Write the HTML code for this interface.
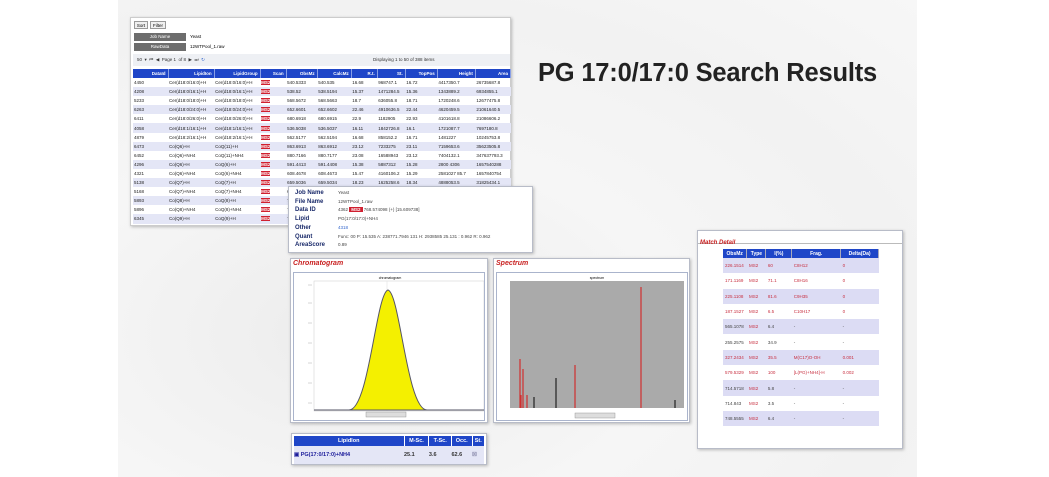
<!DOCTYPE html>
<html><head><meta charset="utf-8"><style>
*{margin:0;padding:0;box-sizing:border-box}
body{width:1049px;height:477px;background:#fff;position:relative;overflow:hidden;font-family:"Liberation Sans",sans-serif}
.bg{position:absolute;left:118px;top:0;width:799px;height:477px;background:radial-gradient(ellipse at 30% 70%,#ececec,#f6f6f6 40%,#f2f2f2 70%,#f7f7f7)}
.ab{position:absolute}
.panel{position:absolute;background:#fff;border:1px solid #b8bcc8;box-shadow:1px 1px 3px rgba(0,0,0,.25)}
table{border-collapse:collapse;font-size:4.5px;white-space:nowrap}
.main td{height:9.1px;padding:0 1px;color:#222;overflow:hidden}
.main tr:nth-child(odd) td{background:#e4e6f6}
.main th{background:#1f46c8;color:#fff;height:9px;font-size:4.5px;text-align:right;padding-right:2px;border-right:1px solid #8aa0e6}
.b{color:#3355cc}.r{color:#fff;background:#d02030!important;font-weight:bold}
.lbl{font-weight:bold;color:#1a2a6a;font-size:6px}
.md td{height:15.3px;font-size:4.5px;color:#c83040;padding-left:2px}
.md tr:nth-child(even) td{background:#dcdcf4}
.md th{background:#1f46c8;color:#fff;font-size:5px;height:9px;border-right:1px solid #aab}
.ttl{font-style:italic;font-weight:bold;color:#c82020;font-size:7px}
</style></head><body>
<div class="bg"></div>

<div class="ab" style="left:538px;top:59px;font-size:25.5px;font-weight:bold;color:#222;letter-spacing:-0.2px">PG 17:0/17:0 Search Results</div>

<!-- main table panel -->
<div class="panel" style="left:130px;top:17px;width:381px;height:209px;border-color:#ccc">
 <div class="ab" style="left:3px;top:3px;width:14px;height:8px;border:1px solid #999;background:#f0f0f0;font-size:4.5px;text-align:center;line-height:7px">Sort</div>
 <div class="ab" style="left:19px;top:3px;width:16px;height:8px;border:1px solid #999;background:#f0f0f0;font-size:4.5px;text-align:center;line-height:7px">Filter</div>
 <div class="ab" style="left:3px;top:15px;width:52px;height:8px;background:#6d6d6d;color:#fff;font-size:4.5px;text-align:center;line-height:8px">Job Name</div>
 <div class="ab" style="left:3px;top:25px;width:52px;height:8px;background:#6d6d6d;color:#fff;font-size:4.5px;text-align:center;line-height:8px">RawData</div>
 <div class="ab" style="left:59px;top:15px;font-size:4.5px;line-height:8px">Yeast</div>
 <div class="ab" style="left:59px;top:25px;font-size:4.5px;line-height:8px">12WTPool_1.raw</div>
 <div class="ab" style="left:2px;top:36px;width:377px;height:12px;background:#eef0f4;font-size:4.5px;line-height:12px;padding-left:4px;color:#333">50 &nbsp;▾ &nbsp;⏮ &nbsp;◀ &nbsp;Page 1 &nbsp;of 8 &nbsp;▶ &nbsp;⏭ &nbsp;<span style="color:#36c">↻</span><span style="position:absolute;left:240px">Displaying 1 to 50 of 388 items</span></div>
 <table class="main ab" style="left:2px;top:51px;width:378px">
 <tr><th style="width:35px">DataId</th><th style="width:46px">LipidIon</th><th style="width:46px">LipidGroup</th><th style="width:26px">Scan</th><th style="width:31px">ObsMz</th><th style="width:34px">CalcMz</th><th style="width:26px">R.t.</th><th style="width:28px">St.</th><th style="width:32px">TopPos</th><th style="width:38px">Height</th><th style="width:35px">Area</th></tr>
 <tr><td class="b">4450</td><td class="b">Cer(d18:0/16:0)+H</td><td>Cer(d18:0/16:0)+H</td><td><span class="r">MS2</span></td><td>540.5333</td><td>540.535</td><td>16.68</td><td>968747.1</td><td>16.72</td><td>4417350.7</td><td>26735687.8</td></tr>
 <tr><td class="b">4208</td><td class="b">Cer(d18:0/16:1)+H</td><td>Cer(d18:0/16:1)+H</td><td><span class="r">MS2</span></td><td>538.52</td><td>538.5194</td><td>15.37</td><td>1471284.5</td><td>15.36</td><td>1343889.2</td><td>6934855.1</td></tr>
 <tr><td class="b">5233</td><td class="b">Cer(d18:0/18:0)+H</td><td>Cer(d18:0/18:0)+H</td><td><span class="r">MS2</span></td><td>568.5672</td><td>568.5663</td><td>18.7</td><td>636055.8</td><td>18.71</td><td>1720248.6</td><td>12677475.8</td></tr>
 <tr><td class="b">6263</td><td class="b">Cer(d18:0/24:0)+H</td><td>Cer(d18:0/24:0)+H</td><td><span class="r">MS2</span></td><td>652.6601</td><td>652.6602</td><td>22.46</td><td>4910636.5</td><td>22.44</td><td>4620459.5</td><td>21061640.5</td></tr>
 <tr><td class="b">6411</td><td class="b">Cer(d18:0/26:0)+H</td><td>Cer(d18:0/26:0)+H</td><td><span class="r">MS2</span></td><td>680.6918</td><td>680.6915</td><td>22.9</td><td>1182905</td><td>22.93</td><td>4101618.8</td><td>21086606.2</td></tr>
 <tr><td class="b">4058</td><td class="b">Cer(d18:1/16:1)+H</td><td>Cer(d18:1/16:1)+H</td><td><span class="r">MS2</span></td><td>536.5038</td><td>536.5037</td><td>16.11</td><td>1842726.8</td><td>16.1</td><td>1721087.7</td><td>7697180.8</td></tr>
 <tr><td class="b">4879</td><td class="b">Cer(d18:2/16:1)+H</td><td>Cer(d18:2/16:1)+H</td><td><span class="r">MS2</span></td><td>562.5177</td><td>562.5194</td><td>16.68</td><td>858152.2</td><td>16.71</td><td>1481227</td><td>10245753.8</td></tr>
 <tr><td class="b">6473</td><td class="b">Co(Q6)+H</td><td>CoQ(11)+H</td><td><span class="r">MS2</span></td><td>863.6913</td><td>863.6912</td><td>23.12</td><td>7233275</td><td>23.11</td><td>7159653.6</td><td>35623505.8</td></tr>
 <tr><td class="b">6452</td><td class="b">Co(Q6)+NH4</td><td>CoQ(11)+NH4</td><td><span class="r">MS2</span></td><td>880.7166</td><td>880.7177</td><td>23.08</td><td>16588943</td><td>23.12</td><td>7404132.1</td><td>347637793.3</td></tr>
 <tr><td class="b">4296</td><td class="b">Co(Q6)+H</td><td>CoQ(6)+H</td><td><span class="r">MS2</span></td><td>591.4413</td><td>591.4408</td><td>15.38</td><td>5887312</td><td>15.28</td><td>2800 4306</td><td>1657540288</td></tr>
 <tr><td class="b">4321</td><td class="b">Co(Q6)+NH4</td><td>CoQ(6)+NH4</td><td><span class="r">MS2</span></td><td>608.4678</td><td>608.4673</td><td>15.47</td><td>4160106.2</td><td>15.29</td><td>2581027 85.7</td><td>1657840754</td></tr>
 <tr><td class="b">5138</td><td class="b">Co(Q7)+H</td><td>CoQ(7)+H</td><td><span class="r">MS2</span></td><td>659.5036</td><td>659.5034</td><td>18.23</td><td>1625258.6</td><td>18.34</td><td>4888053.5</td><td>31825434.1</td></tr>
 <tr><td class="b">5168</td><td class="b">Co(Q7)+NH4</td><td>CoQ(7)+NH4</td><td><span class="r">MS2</span></td><td>676</td><td></td><td></td><td></td><td></td><td></td><td></td></tr>
 <tr><td class="b">5893</td><td class="b">Co(Q8)+H</td><td>CoQ(8)+H</td><td><span class="r">MS2</span></td><td>727</td><td></td><td></td><td></td><td></td><td></td><td></td></tr>
 <tr><td class="b">5896</td><td class="b">Co(Q8)+NH4</td><td>CoQ(8)+NH4</td><td><span class="r">MS2</span></td><td>744</td><td></td><td></td><td></td><td></td><td></td><td></td></tr>
 <tr><td class="b">6345</td><td class="b">Co(Q9)+H</td><td>CoQ(9)+H</td><td><span class="r">MS2</span></td><td>795</td><td></td><td></td><td></td><td></td><td></td><td></td></tr>
 </table>
</div>

<!-- detail popup -->
<div class="panel" style="left:288px;top:186px;width:245px;height:67px;padding:2px 0 0 6px;line-height:8.7px;font-size:4.5px;color:#444">
 <div><span class="lbl" style="display:inline-block;width:43px">Job Name</span>Yeast</div>
 <div><span class="lbl" style="display:inline-block;width:43px">File Name</span>12WTPool_1.raw</div>
 <div><span class="lbl" style="display:inline-block;width:43px">Data ID</span>4362 <span class="r" style="padding:0 2px">MS2</span> 768.574098 (+) [15.609738]</div>
 <div><span class="lbl" style="display:inline-block;width:43px">Lipid</span>PG(17:0/17:0)+NH4</div>
 <div><span class="lbl" style="display:inline-block;width:43px">Other</span><span style="color:#36c">4318</span></div>
 <div><span class="lbl" style="display:inline-block;width:43px">Quant</span>Func: 00 P: 15.535 A: 238771.7946 131 H: 2938585 25.131 : 0.962 R: 0.962</div>
 <div><span class="lbl" style="display:inline-block;width:43px">AreaScore</span>0.89</div>
</div>

<!-- chromatogram -->
<div class="panel" style="left:290px;top:258px;width:198px;height:165px">
 <div class="ttl ab" style="left:2px;top:1px">Chromatogram</div>
 <div class="ab" style="left:2px;top:13px;width:192px;height:149px;border:1px solid #aab4cc;background:#fff">
  <svg width="190" height="147" class="ab" style="left:0;top:0">
   <rect x="20" y="8" width="170" height="130" fill="#fff" stroke="#ccc" stroke-width=".5"/>
   <line x1="93" y1="8" x2="93" y2="138" stroke="#ddd" stroke-width=".5"/>
   <path d="M20 137 L55 137 C75 137 82 20 94 17 C106 20 113 137 133 137 L190 137 Z" fill="#f4f000" stroke="#556" stroke-width="1"/>
   <text x="96" y="6" font-size="3.5" text-anchor="middle" font-family="Liberation Sans">chromatogram</text>
   <rect x="72" y="139" width="40" height="5" fill="#ddd" stroke="#888" stroke-width=".4"/>
   <g stroke="#999" stroke-width=".4"><line x1="14" y1="12" x2="18" y2="12"/><line x1="14" y1="30" x2="18" y2="30"/><line x1="14" y1="50" x2="18" y2="50"/><line x1="14" y1="70" x2="18" y2="70"/><line x1="14" y1="90" x2="18" y2="90"/><line x1="14" y1="110" x2="18" y2="110"/><line x1="14" y1="130" x2="18" y2="130"/></g>
  </svg>
 </div>
</div>

<!-- spectrum -->
<div class="panel" style="left:493px;top:258px;width:197px;height:165px">
 <div class="ttl ab" style="left:2px;top:1px">Spectrum</div>
 <div class="ab" style="left:2px;top:13px;width:192px;height:149px;border:1px solid #aab4cc;background:#fff">
  <svg width="190" height="147" class="ab" style="left:0;top:0">
   <rect x="13" y="8" width="174" height="127" fill="#aaaaaa"/>
   <text x="100" y="6" font-size="3.5" text-anchor="middle" font-family="Liberation Sans">spectrum</text>
   <g stroke-width="1.2">
    <line x1="23" y1="135" x2="23" y2="86" stroke="#d03030"/>
    <line x1="26" y1="135" x2="26" y2="96" stroke="#d03030"/>
    <line x1="24" y1="135" x2="24" y2="122" stroke="#d03030"/>
    <line x1="30" y1="135" x2="30" y2="122" stroke="#d03030"/>
    <line x1="37" y1="135" x2="37" y2="124" stroke="#222"/>
    <line x1="59" y1="135" x2="59" y2="105" stroke="#222"/>
    <line x1="78" y1="135" x2="78" y2="92" stroke="#d03030"/>
    <line x1="144" y1="135" x2="144" y2="14" stroke="#d03030"/>
    <line x1="178" y1="135" x2="178" y2="127" stroke="#222"/>
   </g>
   <rect x="78" y="140" width="40" height="5" fill="#ddd" stroke="#888" stroke-width=".4"/>
  </svg>
 </div>
</div>

<!-- lipidion table -->
<div class="panel" style="left:291px;top:433px;width:196px;height:32px;padding:2px">
 <table style="width:190px;font-size:5.5px;font-weight:bold">
  <tr style="background:#1f46c8;color:#fff;height:10px"><th style="width:110px;border-right:1px solid #fff">LipidIon</th><th style="border-right:1px solid #fff">M-Sc.</th><th style="border-right:1px solid #fff">T-Sc.</th><th style="border-right:1px solid #fff">Occ.</th><th>St.</th></tr>
  <tr style="background:#e4e6f6;height:18px;color:#1a1a9a"><td>▣ PG(17:0/17:0)+NH4</td><td style="color:#333">25.1</td><td style="color:#333">3.6</td><td style="color:#333">62.6</td><td style="color:#88a">☒</td></tr>
 </table>
</div>

<!-- match detail -->
<div class="panel" style="left:697px;top:230px;width:206px;height:219px">
 <div class="ab" style="left:0;top:0;width:204px;height:13px;border-bottom:1px solid #bbb;padding-left:2px"><span class="ttl" style="font-size:6px">Match Detail</span></div>
 <table class="md ab" style="left:25px;top:18px;width:156px">
  <tr><th style="width:24px">ObsMz</th><th style="width:19px">Type</th><th style="width:26px">I(%)</th><th style="width:49px">Frag.</th><th style="width:38px">Delta(Da)</th></tr>
  <tr><td>226.1514</td><td>MS2</td><td>60</td><td>C8H12</td><td>0</td></tr>
  <tr><td>171.1169</td><td>MS2</td><td>71.1</td><td>C8H16</td><td>0</td></tr>
  <tr><td>225.1108</td><td>MS2</td><td>81.6</td><td>C9H35</td><td>0</td></tr>
  <tr><td>187.1527</td><td>MS2</td><td>6.5</td><td>C10H17</td><td>0</td></tr>
  <tr><td style="color:#444">565.1078</td><td>MS2</td><td style="color:#444">6.4</td><td style="color:#444">-</td><td style="color:#444">-</td></tr>
  <tr><td style="color:#444">255.2575</td><td>MS2</td><td style="color:#444">34.9</td><td style="color:#444">-</td><td style="color:#444">-</td></tr>
  <tr><td>327.2434</td><td>MS2</td><td>35.5</td><td>M(C17)O-OH</td><td>0.001</td></tr>
  <tr><td>579.5329</td><td>MS2</td><td>100</td><td>[L(PG)+NH4]-H</td><td>0.002</td></tr>
  <tr><td style="color:#444">714.5718</td><td>MS2</td><td style="color:#444">5.8</td><td style="color:#444">-</td><td style="color:#444">-</td></tr>
  <tr><td style="color:#444">714.843</td><td>MS2</td><td style="color:#444">3.5</td><td style="color:#444">-</td><td style="color:#444">-</td></tr>
  <tr><td style="color:#444">748.5555</td><td>MS2</td><td style="color:#444">6.4</td><td style="color:#444">-</td><td style="color:#444">-</td></tr>
 </table>
</div>
</body></html>
